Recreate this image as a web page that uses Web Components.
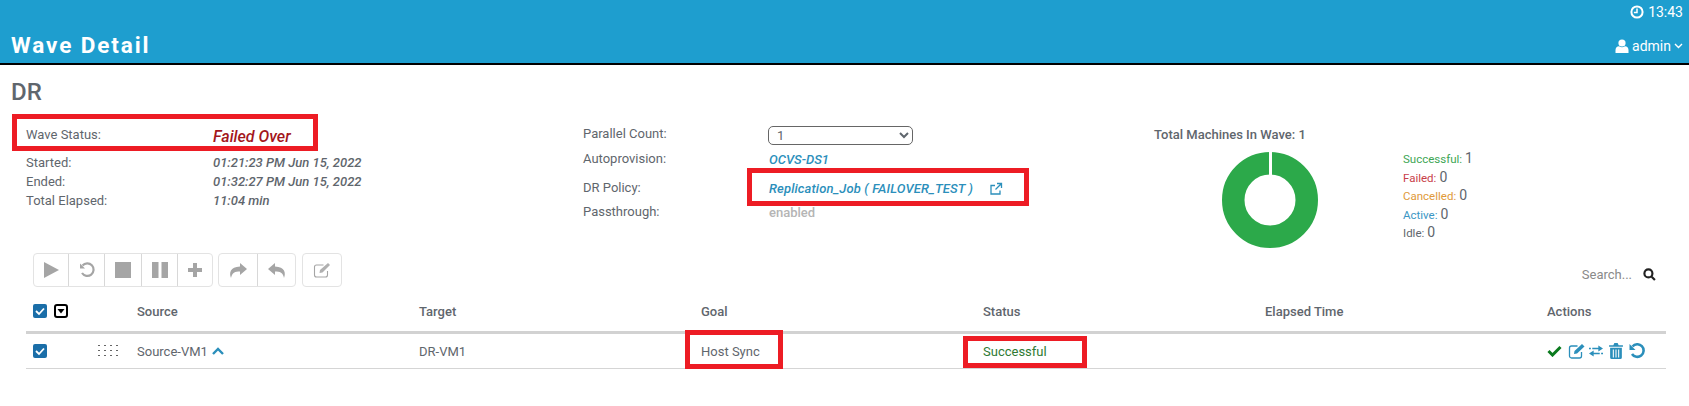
<!DOCTYPE html>
<html><head><meta charset="utf-8"><style>
html,body{margin:0;padding:0;background:#fff;height:406px;overflow:hidden;font-family:Roboto,sans-serif;color:#5f666d}
</style></head><body>
<app-header></app-header>
<wave-summary></wave-summary>
<wave-toolbar></wave-toolbar>
<wave-table></wave-table>
<script>
function def(name,html){customElements.define(name,class extends HTMLElement{constructor(){super();this.attachShadow({mode:'open'}).innerHTML=html;}});}
const ic={
clock:'<svg width="14" height="14" viewBox="0 0 14 14"><circle cx="7" cy="7" r="5.6" fill="none" stroke="#fff" stroke-width="2"/><path d="M7 3.500V7.600H3.900" fill="none" stroke="#fff" stroke-width="1.500"/></svg>',
user:'<svg width="14" height="14" viewBox="0 0 14 14" fill="#fff"><circle cx="7" cy="4" r="3.600"/><path d="M0.500 14V11C.5 8.600 2 7.200 4 7.200 5 8 6 8.300 7 8.300S9 8 10 7.200C12 7.200 13.500 8.600 13.500 11V14Z"/></svg>',
chev:'<svg width="9" height="6" viewBox="0 0 9 6"><path d="M1 1L4.500 4.500 8 1" fill="none" stroke="#fff" stroke-width="1.400"/></svg>'};
def('app-header',`<style>:host{display:flex;flex-direction:column;height:63px;background:#1e9ecf;border-bottom:2px solid #000;color:#fff}
.t{display:flex;justify-content:flex-end;align-items:center;gap:4px;height:24px;padding:0 6px 0 0;font-size:14px}
.b{flex:1;display:flex;justify-content:space-between;align-items:center;padding:3px 6px 0 11px}
h1{margin:0;font:700 22.500px Roboto,sans-serif;letter-spacing:1.900px}
.u{display:flex;align-items:center;gap:3px;font-size:14px;margin-top:2px}</style>
<div class="t">${ic.clock}<span>13:43</span></div>
<div class="b"><h1>Wave Detail</h1><div class="u">${ic.user}<span>admin</span>${ic.chev}</div></div>`);
def('wave-summary',`<style>:host{display:block;height:188px;position:relative;font-size:13px}
h2{margin:0;position:absolute;left:11px;top:13px;font:500 24px Roboto,sans-serif;color:#5f666d}
.row{display:flex;align-items:center}
.col{position:absolute;display:flex;flex-direction:column}
.l{width:187px}.v{font-style:italic;font-weight:500;color:#5f666d}
.box{position:absolute;border:5px solid #ed1c24;box-sizing:border-box}
.lnk{color:#2b8fbb}
select{width:145px;height:19px;border:1px solid #666;border-radius:5px;background:#fff;font:13px Roboto,sans-serif;color:#5f666d;padding:0 4px}
.leg{position:absolute;left:1403px;top:85px;font-size:11.500px;display:flex;flex-direction:column}
.leg div{height:18.600px;display:flex;align-items:baseline;gap:3px}
.leg b{font-weight:400;font-size:14px;color:#5f666d}
</style>
<h2>DR</h2>
<div class="box" style="left:12px;top:49px;width:306px;height:37px"></div>
<div class="col" style="left:26px;top:62px"><div class="row" style="align-items:flex-start"><span class="l">Wave Status:</span><span class="v" style="color:#a3161c;font-size:16px">Failed Over</span></div></div>
<div class="col" style="left:26px;top:88px;line-height:19px"><div class="row"><span class="l">Started:</span><span class="v">01:21:23 PM Jun 15, 2022</span></div><div class="row"><span class="l">Ended:</span><span class="v">01:32:27 PM Jun 15, 2022</span></div><div class="row"><span class="l">Total Elapsed:</span><span class="v">11:04 min</span></div></div>
<div class="col" style="left:583px;top:59px;line-height:19px;gap:6px"><span>Parallel Count:</span><span>Autoprovision:</span><span style="margin-top:4px">DR Policy:</span><span style="margin-top:-1px">Passthrough:</span></div>
<div class="col" style="left:768px;top:61px"><select><option>1</option></select></div>
<div class="box" style="left:747px;top:103px;width:282px;height:38px"></div>
<div class="col" style="left:769px;top:85px;line-height:19px"><span class="v lnk">OCVS-DS1</span></div>
<div class="col" style="left:769px;top:114px;line-height:19px"><span class="lnk" style="font-style:italic;font-weight:500;letter-spacing:.13px;display:flex;gap:16px;align-items:center">Replication_Job ( FAILOVER_TEST ) <svg width="14" height="14" viewBox="0 0 14 14" fill="none" stroke="#2b8fbb" stroke-width="1.300"><path d="M11 8.500V12H2V3.500H6M8 1.500H12.500V6M12.500 1.500L6.500 7.500"/></svg></span></div>
<div class="col" style="left:769px;top:138px;line-height:19px;color:#b5b5b5;font-weight:500">enabled</div>
<div class="col" style="left:1154px;top:62px;font-weight:500">Total Machines In Wave: 1</div>
<svg style="position:absolute;left:1222px;top:87px" width="96" height="96" viewBox="0 0 96 96"><circle cx="48" cy="48" r="36.750" fill="none" stroke="#2ca94a" stroke-width="22.500"/><rect x="47" y="0" width="3" height="24" fill="#fff"/></svg>
<div class="leg"><div style="color:#3da655">Successful: <b>1</b></div><div style="color:#c8404a">Failed: <b>0</b></div><div style="color:#e09a3a">Cancelled: <b>0</b></div><div style="color:#3b96c4">Active: <b>0</b></div><div style="color:#5f666d">Idle: <b>0</b></div></div>`);
def('wave-toolbar',`<style>:host{display:flex;gap:5px;position:relative;height:34px;padding-left:33px}
.g{display:flex;border:1px solid #e3e3e3;border-radius:4px;height:32px}
.g span{display:flex;align-items:center;justify-content:center;border-left:1px solid #d8d8d8;box-sizing:border-box}
.g span:first-child{border-left:0}
.s{position:absolute;right:33px;top:14px;display:flex;gap:11px;align-items:center;font-size:13px;color:#8a8a8a}
</style>
<div class="g"><span style="width:34px"><svg width="15" height="16"><path d="M0 0L15 8 0 16Z" fill="#a5a5a5"/></svg></span><span style="width:36px"><svg width="16" height="16" viewBox="0 0 16 16" fill="none" stroke="#a5a5a5" stroke-width="2.200"><path d="M3.500 3.500A6.300 6.300 0 1 1 3 11"/><path d="M1 1.500V6.500H6" stroke="none" fill="#a5a5a5"/></svg></span><span style="width:37px"><svg width="16" height="16"><rect width="16" height="16" fill="#a5a5a5"/></svg></span><span style="width:36px"><svg width="16" height="16"><rect width="6.500" height="16" fill="#a5a5a5"/><rect x="9.500" width="6.500" height="16" fill="#a5a5a5"/></svg></span><span style="width:35px"><svg width="14" height="14"><path d="M5 0H9V5H14V9H9V14H5V9H0V5H5Z" fill="#a5a5a5"/></svg></span></div>
<div class="g"><span style="width:38px"><svg width="18" height="15" viewBox="0 0 18 15"><path d="M11 0L18 6 11 12V8.500C6 8.500 3 9.500 2 15 0 10 1 4 11 3.500Z" fill="#a5a5a5"/></svg></span><span style="width:38px"><svg width="18" height="15" viewBox="0 0 18 15"><path d="M7 0L0 6 7 12V8.500C12 8.500 15 9.500 16 15 18 10 17 4 7 3.500Z" fill="#a5a5a5"/></svg></span></div>
<div class="g" style="margin-left:1px"><span style="width:38px"><svg width="19" height="16" viewBox="0 0 18 16" fill="none" stroke="#a5a5a5" stroke-width="1.100"><path d="M14 9V13A2 2 0 0 1 12 15H3A2 2 0 0 1 1 13V5A2 2 0 0 1 3 3H10"/><path d="M6.500 8L14.500 1 16.500 3 9 10.500 6 11Z" fill="#b0b0b0" stroke="none"/></svg></span></div>
<div class="s"><span>Search...</span><svg width="13" height="13" viewBox="0 0 12 12" fill="none" stroke="#222" stroke-width="2"><circle cx="5" cy="5" r="3.700"/><path d="M8 8L11 11"/></svg></div>`);
const chk='<svg width="14" height="14" viewBox="0 0 14 14"><rect width="14" height="14" rx="2" fill="#1a6ea8"/><path d="M3 7L6 10 11 4.500" fill="none" stroke="#fff" stroke-width="1.800"/></svg>';
def('wave-table',`<style>:host{display:block;position:relative;margin:0 0 0 26px;width:1640px;font-size:13px}
.r{display:grid;grid-template-columns:21px 21px 62px 282px 282px 282px 282px 282px 1fr;align-items:center;padding-left:7px}
.r>span{display:flex;align-items:center;gap:4px}
.h{height:40px;padding-top:4px;font-weight:500;border-bottom:3px solid #d2d2d2}
.d{height:34px;border-bottom:1px solid #d5d5d5}
.box{position:absolute;border:5px solid #ed1c24;box-sizing:border-box}
.a{gap:0!important}
</style>
<div class="r h"><span>${chk}</span><span><svg width="14" height="14" viewBox="0 0 14 14"><rect x="1" y="1" width="12" height="12" rx="2" fill="#fff" stroke="#000" stroke-width="2"/><path d="M3.500 5H10.500L7 9.500Z"/></svg></span><span></span><span>Source</span><span>Target</span><span>Goal</span><span>Status</span><span>Elapsed Time</span><span>Actions</span></div>
<div class="r d"><span>${chk}</span><span></span><span><svg style="margin-left:23px" width="20" height="12"><g fill="#666"><rect x="0" y="0" width="2" height="1"/><rect x="6" y="0" width="2" height="1"/><rect x="12" y="0" width="2" height="1"/><rect x="18" y="0" width="2" height="1"/><rect x="0" y="5" width="2" height="1"/><rect x="6" y="5" width="2" height="1"/><rect x="12" y="5" width="2" height="1"/><rect x="18" y="5" width="2" height="1"/><rect x="0" y="10" width="2" height="1"/><rect x="6" y="10" width="2" height="1"/><rect x="12" y="10" width="2" height="1"/><rect x="18" y="10" width="2" height="1"/></g></svg></span><span>Source-VM1 <svg width="12" height="8" viewBox="0 0 12 8"><path d="M1 7L6 2 11 7" fill="none" stroke="#2b8fbb" stroke-width="2.400"/></svg></span><span>DR-VM1</span><span>Host Sync</span><span style="color:#2f7a33">Successful</span><span></span><span class="a"><svg width="15" height="12" viewBox="0 0 15 12"><path d="M1.500 6L5.500 10 13.500 2" fill="none" stroke="#0a7a1e" stroke-width="3"/></svg><svg style="margin-left:6px" width="18" height="16" viewBox="0 0 17 16" fill="none" stroke="#2b8fbb" stroke-width="1.300"><path d="M13 9V13A2 2 0 0 1 11 15H3A2 2 0 0 1 1 13V5A2 2 0 0 1 3 3H9"/><path d="M6 8L13.500 1 16 3.500 8.500 10.500 5.500 11Z" fill="#2b8fbb" stroke="none"/></svg><svg style="margin-left:3px" width="14" height="12" viewBox="0 0 15 12" fill="#2b8fbb"><path d="M0 2.500H2V4H0ZM3.500 2.500H10V0L15 3.250 10 6.500V4H3.500ZM15 8H13V9.500H15ZM11.500 8H5V5.500L0 8.750 5 12V9.500H11.500Z"/></svg><svg style="margin-left:6px" width="14" height="16" viewBox="0 0 13 15" fill="#2b8fbb"><path d="M0 2H4L5 0H8L9 2H13V3.500H0ZM1 4.500H12V13.500A1.500 1.500 0 0 1 10.500 15H2.500A1.500 1.500 0 0 1 1 13.500ZM3.500 6V13.500H4.500V6ZM6 6V13.500H7V6ZM8.500 6V13.500H9.500V6Z" fill-rule="evenodd"/></svg><svg style="margin-left:6px" width="16" height="16" viewBox="0 0 16 16" fill="none" stroke="#2b8fbb" stroke-width="2.600"><path d="M3.500 3.500A6.300 6.300 0 1 1 3 11"/><path d="M0.500 1V7H6.500" stroke="none" fill="#2b8fbb"/></svg></span></div>
<div class="box" style="left:659px;top:43px;width:98px;height:39px"></div>
<div class="box" style="left:937px;top:49px;width:124px;height:32px"></div>`);
</script></body></html>
